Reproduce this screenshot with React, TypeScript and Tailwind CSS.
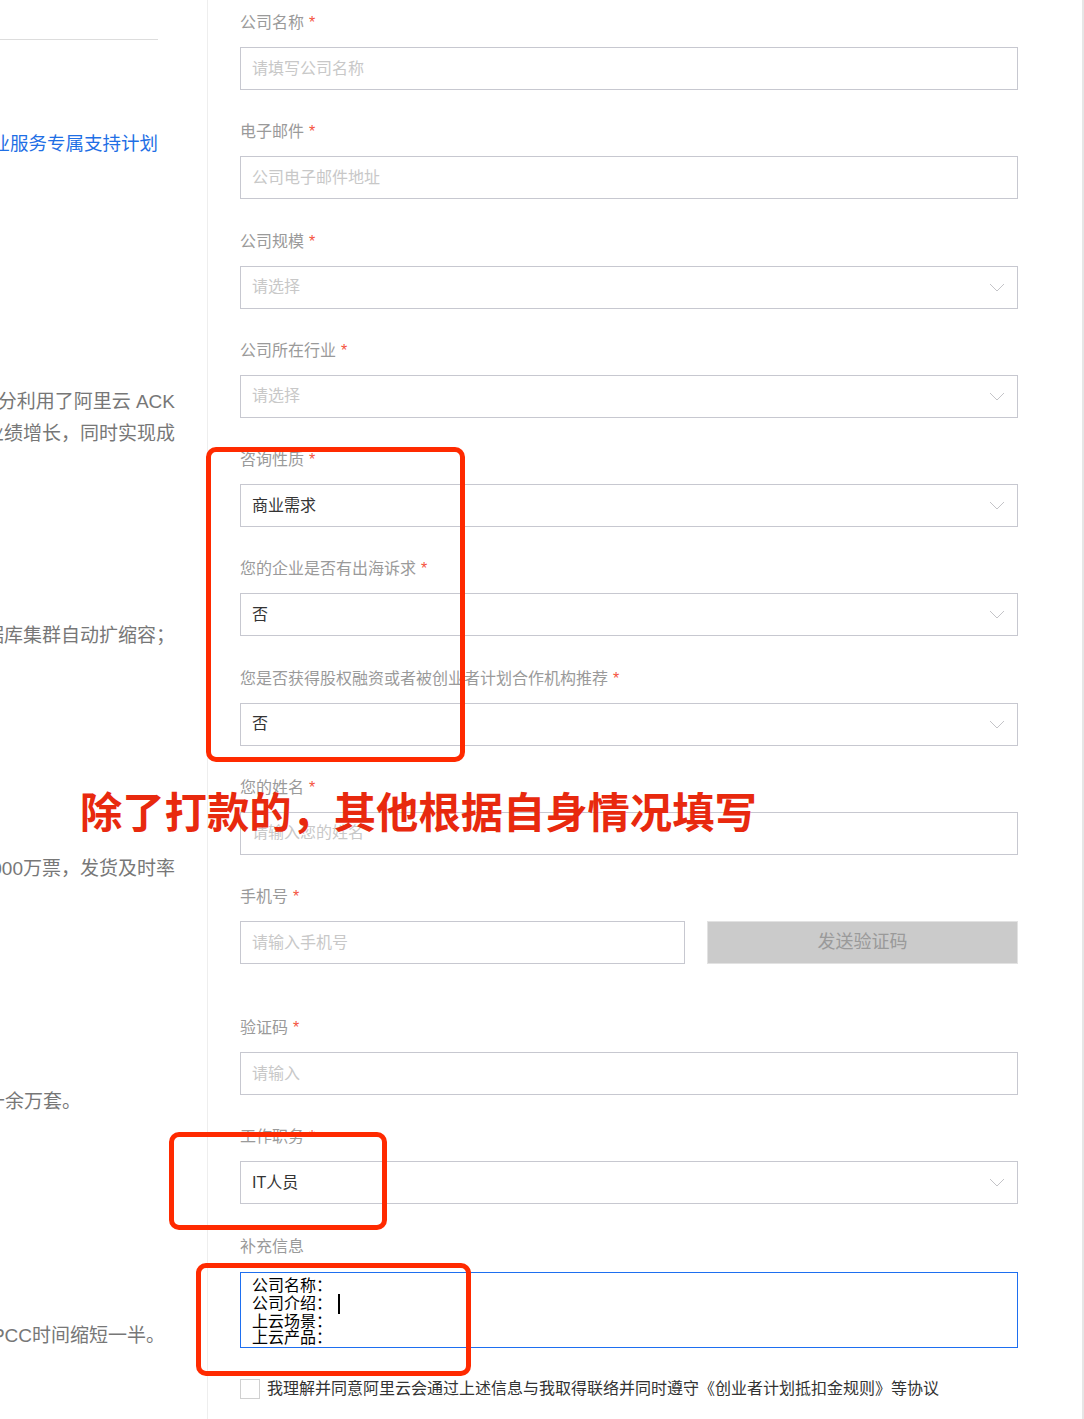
import React from 'react';

type Field = {
  label: string;
  required?: boolean;
  kind: 'input' | 'select';
  placeholder?: string;
  value?: string;
};

const topFields: Field[] = [
  { label: '公司名称', required: true, kind: 'input', placeholder: '请填写公司名称' },
  { label: '电子邮件', required: true, kind: 'input', placeholder: '公司电子邮件地址' },
  { label: '公司规模', required: true, kind: 'select', placeholder: '请选择' },
  { label: '公司所在行业', required: true, kind: 'select', placeholder: '请选择' },
  { label: '咨询性质', required: true, kind: 'select', value: '商业需求' },
  { label: '您的企业是否有出海诉求', required: true, kind: 'select', value: '否' },
  { label: '您是否获得股权融资或者被创业者计划合作机构推荐', required: true, kind: 'select', value: '否' },
  { label: '您的姓名', required: true, kind: 'input', placeholder: '请输入您的姓名' },
];

const Label = ({ text, required }: { text: string; required?: boolean }) => (
  <div className="h-[20px] text-[16px] leading-[22px] text-[#9a9a9a]">
    {text}
    {required && <span className="ml-[5px] text-[16px] text-[#f5533d]">*</span>}
  </div>
);

const Chevron = () => (
  <svg width="16" height="9" viewBox="0 0 16 9" fill="none">
    <path d="M1 1L8 8L15 1" stroke="#c4c4c8" strokeWidth="1" />
  </svg>
);

const Box = ({ field }: { field: Field }) => (
  <div className="mt-[15px] flex h-[43px] w-[778px] items-center justify-between border border-[#c7c8d0] bg-white pl-[11px] pr-[12px] text-[16px]">
    {field.value ? (
      <span className="text-[#333]">{field.value}</span>
    ) : (
      <span className="text-[#c8c8c8]">{field.placeholder}</span>
    )}
    {field.kind === 'select' && <Chevron />}
  </div>
);

const LeftLine = ({ text, width, cls = '' }: { text: string; width: string; cls?: string }) => (
  <div className={`flex h-[32px] items-center justify-end whitespace-nowrap ${width} ${cls}`}>
    {text}
  </div>
);

const App = () => {
  return (
    <div className="relative flex h-[1419px] w-[1084px] overflow-hidden bg-white font-['Liberation_Sans','Noto_Sans_CJK_SC',sans-serif]">
      {/* left column, clipped */}
      <div className="w-[208px] shrink-0 overflow-hidden border-r border-[#eeeeee] text-[19px] text-[#777]">
        <div className="h-[40px] w-[158px] border-b border-[#dddddd]" />
        <LeftLine text="企业服务专属支持计划" width="w-[158px]" cls="mt-[88px] text-[18.5px] text-[#1f6fe5]" />
        <LeftLine text="充分利用了阿里云 ACK" width="w-[175px]" cls="mt-[226px]" />
        <LeftLine text="业绩增长，同时实现成" width="w-[175px]" />
        <LeftLine text="数据库集群自动扩缩容；" width="w-[175px]" cls="mt-[170px]" />
        <LeftLine text="3000万票，发货及时率" width="w-[175px]" cls="mt-[201px]" />
        <LeftLine text="数十余万套。" width="w-[81px]" cls="mt-[201px]" />
        <LeftLine text="VPCC时间缩短一半。" width="w-[165px]" cls="mt-[202px]" />
      </div>

      {/* form */}
      <div className="flex-1 pl-[32px] pt-[12px]">
        {topFields.map((f) => (
          <div key={f.label} className="mb-[31.25px]">
            <Label text={f.label} required={f.required} />
            <Box field={f} />
          </div>
        ))}

        <div className="mb-[53px]">
          <Label text="手机号" required />
          <div className="mt-[15px] flex w-[778px] gap-[22px]">
            <div className="flex h-[43px] w-[445px] items-center border border-[#c7c8d0] pl-[11px] text-[16px] text-[#c8c8c8]">
              请输入手机号
            </div>
            <button className="h-[43px] flex-1 border border-[#e2e2e2] bg-[#cbcbcb] text-[18px] text-[#9a9a9a]">
              发送验证码
            </button>
          </div>
        </div>

        <div className="mb-[31.25px]">
          <Label text="验证码" required />
          <Box field={{ label: '验证码', kind: 'input', placeholder: '请输入' }} />
        </div>

        <div className="mb-[31.25px]">
          <Label text="工作职务" required />
          <Box field={{ label: '工作职务', kind: 'select', value: 'IT人员' }} />
        </div>

        <div className="mb-[31px]">
          <Label text="补充信息" />
          <div className="mt-[16px] h-[76px] w-[778px] border border-[#1e6ff0] pl-[11px] pt-[5px] text-[16px] leading-[16px] text-black">
            <div>公司名称：</div>
            <div className="flex items-center">
              公司介绍：<span className="ml-[6px] inline-block h-[20px] w-[2px] bg-black" />
            </div>
            <div>上云场景：</div>
            <div>上云产品：</div>
          </div>
        </div>

        <div className="flex items-center gap-[7px]">
          <span className="h-[20px] w-[20px] border border-[#d0d0d0]" />
          <span className="text-[16px] leading-[20px] text-[#333]">
            我理解并同意阿里云会通过上述信息与我取得联络并同时遵守《创业者计划抵扣金规则》等协议
          </span>
        </div>
      </div>

      <div className="w-[2px] shrink-0 bg-[#e6e6e6]" />

      {/* annotations */}
      <div className="absolute left-[206px] top-[447px] h-[315px] w-[259px] rounded-[10px] border-[5px] border-[#ff2a00]" />
      <div className="absolute left-[169px] top-[1132px] h-[98px] w-[218px] rounded-[10px] border-[5px] border-[#ff2a00]" />
      <div className="absolute left-[196px] top-[1263px] h-[113px] w-[275px] rounded-[10px] border-[5px] border-[#ff2a00]" />
      <div className="absolute left-[80px] top-[788px] whitespace-nowrap text-[42.3px] font-bold leading-[44px] text-[#e8290e] font-['Noto_Sans_CJK_SC',sans-serif]">
        除了打款的，其他根据自身情况填写
      </div>
    </div>
  );
};

export default App;
